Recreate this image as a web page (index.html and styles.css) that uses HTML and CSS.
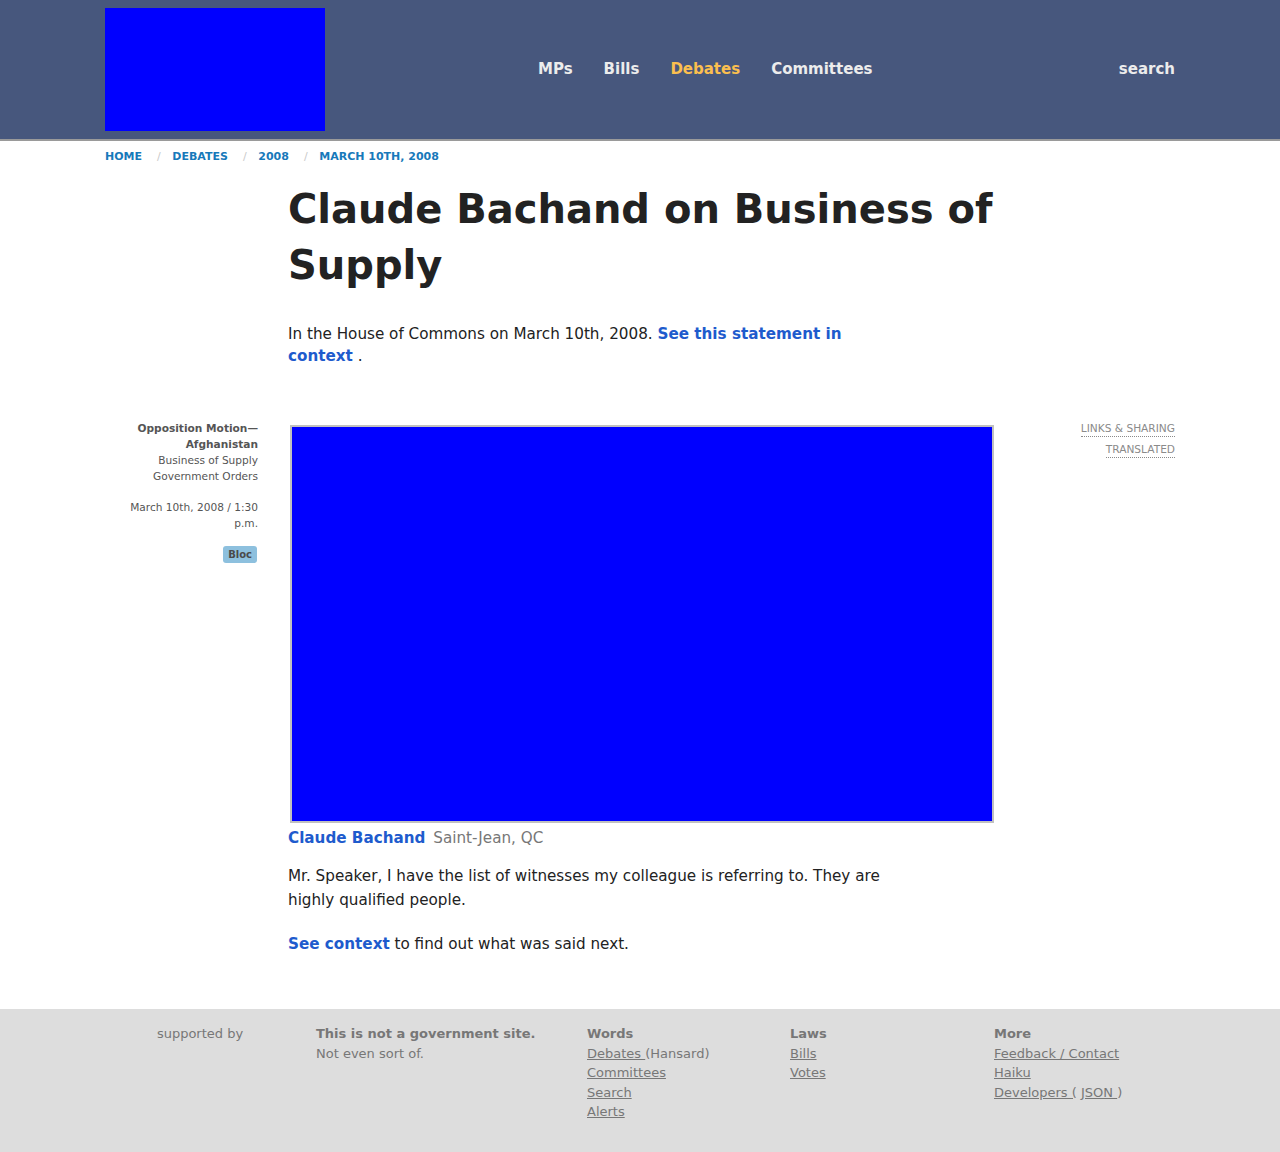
FILE: index.html
```html
<!DOCTYPE html>
<html>
<head>
<meta charset="utf-8">
<title>Claude Bachand on Business of Supply</title>
<link rel="stylesheet" href="styles.css">
</head>
<body>
<header class="topbar">
  <div class="wrap topbar-inner">
    <a class="logo" href="#"></a>
    <nav class="mainnav">
      <a href="#">MPs</a>
      <a href="#">Bills</a>
      <a href="#" class="active">Debates</a>
      <a href="#">Committees</a>
    </nav>
    <a class="search" href="#">search</a>
  </div>
</header>

<div class="wrap">
  <nav class="crumbs">
    <a href="#">Home</a><span class="sep">/</span><a href="#">Debates</a><span class="sep">/</span><a href="#">2008</a><span class="sep">/</span><a href="#">March 10th, 2008</a>
  </nav>

  <div class="intro">
    <h1 class="title">Claude Bachand on Business of Supply</h1>
    <p class="lede">In the House of Commons on March 10th, 2008. <a href="#">See this statement in context</a> .</p>
  </div>

  <div class="statement">
    <aside class="meta">
      <div class="meta-topic">
        <strong>Opposition Motion—Afghanistan</strong><br>
        Business of Supply<br>
        Government Orders
      </div>
      <div class="meta-date">March 10th, 2008 / 1:30 p.m.</div>
      <div class="meta-party"><span class="badge">Bloc</span></div>
    </aside>

    <div class="body">
      <div class="video"></div>
      <p class="speaker"><a href="#">Claude Bachand</a> <span class="riding">Saint-Jean, QC</span></p>
      <p class="text">Mr. Speaker, I have the list of witnesses my colleague is referring to. They are highly qualified people.</p>
      <p class="text"><a href="#">See context</a> to find out what was said next.</p>
    </div>

    <aside class="tools">
      <a href="#">Links &amp; Sharing</a>
      <a href="#">Translated</a>
    </aside>
  </div>
</div>

<footer class="footer">
  <div class="wrap footer-grid">
    <div class="fcol support">supported by</div>
    <div class="fcol">
      <strong>This is not a government site.</strong>
      <span>Not even sort of.</span>
    </div>
    <div class="fcol">
      <strong>Words</strong>
      <span><a href="#">Debates </a>(Hansard)</span>
      <a href="#">Committees</a>
      <a href="#">Search</a>
      <a href="#">Alerts</a>
    </div>
    <div class="fcol">
      <strong>Laws</strong>
      <a href="#">Bills</a>
      <a href="#">Votes</a>
    </div>
    <div class="fcol">
      <strong>More</strong>
      <a href="#">Feedback / Contact</a>
      <a href="#">Haiku</a>
      <span><a href="#">Developers (</a> <a href="#">JSON </a>)</span>
    </div>
  </div>
</footer>
</body>
</html>
```

FILE: styles.css
```css
* { box-sizing: border-box; }

html, body {
  margin: 0;
  padding: 0;
}

body {
  font-family: "DejaVu Sans", "Liberation Sans", sans-serif;
  color: #222;
  background: #fff;
}

a { text-decoration: none; }

.wrap {
  width: 1070px;
  margin: 0 auto;
}

/* Header */
.topbar {
  background: #47577d;
  border-bottom: 2px solid #9a9a9a;
}

.topbar-inner {
  display: flex;
  align-items: center;
  padding: 8px 0;
}

.logo {
  display: block;
  width: 220px;
  height: 123px;
  background: #0000ff;
}

.mainnav {
  display: flex;
  gap: 31px;
  margin-left: 213px;
  margin-bottom: 2px;
}

.mainnav a,
.search {
  color: #ececec;
  font-weight: bold;
  font-size: 15px;
  line-height: 20px;
}

.mainnav a.active { color: #fbbf4f; }

.search {
  margin-left: auto;
  margin-bottom: 2px;
}

/* Breadcrumbs */
.crumbs {
  padding-top: 8px;
  font-size: 11px;
  line-height: 16px;
  font-weight: bold;
  text-transform: uppercase;
}

.crumbs a { color: #1779ba; }

.crumbs .sep {
  color: #cacaca;
  font-weight: normal;
  margin: 0 11.6px 0 15px;
}

/* Intro */
.intro {
  margin-left: 183px;
}

.title {
  margin: 16px 0 0;
  font-size: 40px;
  line-height: 56px;
  font-weight: bold;
  color: #222;
  width: 710px;
}

.lede {
  margin: 30px 0 0;
  width: 600px;
  font-size: 15.2px;
  line-height: 22px;
}

.lede a,
.text a,
.speaker a {
  color: #1e5bcd;
  font-weight: bold;
}

/* Statement */
.statement {
  display: grid;
  grid-template-columns: 153px 705px 1fr;
  column-gap: 30px;
  margin-top: 53px;
}

.meta {
  text-align: right;
  font-size: 10.6px;
  line-height: 16px;
  color: #555;
}

.meta strong { color: #555; }

.meta-date { margin-top: 15px; }

.meta-party { margin-top: 15px; }

.badge {
  display: inline-block;
  background: #8dc0de;
  color: #4a4a4a;
  font-weight: bold;
  font-size: 10px;
  line-height: 17px;
  padding: 0 5px;
  border-radius: 3px;
  margin-right: 1px;
}

.body { min-width: 0; }

.video {
  margin: 5px 0 0 2px;
  width: 704px;
  height: 398px;
  background: #0000ff;
  border: 2px solid #c0c0c0;
}

.speaker {
  margin: 4px 0 0;
  font-size: 15.2px;
  line-height: 22px;
}

.riding {
  color: #777;
  margin-left: 3px;
}

.text {
  margin: 15px 0 0;
  width: 600px;
  font-size: 15.2px;
  line-height: 24px;
}

.text + .text { margin-top: 20px; }

.tools {
  display: flex;
  flex-direction: column;
  align-items: flex-end;
  gap: 4px;
}

.tools a {
  color: #8a8a8a;
  font-size: 10.6px;
  line-height: 15px;
  text-transform: uppercase;
  border-bottom: 1px dotted #8a8a8a;
  margin-top: 1px;
}

/* Footer */
.footer {
  background: #dddddd;
  margin-top: 53px;
  padding: 15px 0 30px;
  font-size: 13px;
  line-height: 19.5px;
  color: #777;
}

.footer-grid {
  display: grid;
  grid-template-columns: 211px 271px 203px 204px 1fr;
}

.fcol {
  display: flex;
  flex-direction: column;
  align-items: flex-start;
}

.fcol.support {
  align-items: center;
  padding-right: 21px;
}

.fcol strong { color: #777; }

.fcol a {
  color: #777;
  text-decoration: underline;
}
```
